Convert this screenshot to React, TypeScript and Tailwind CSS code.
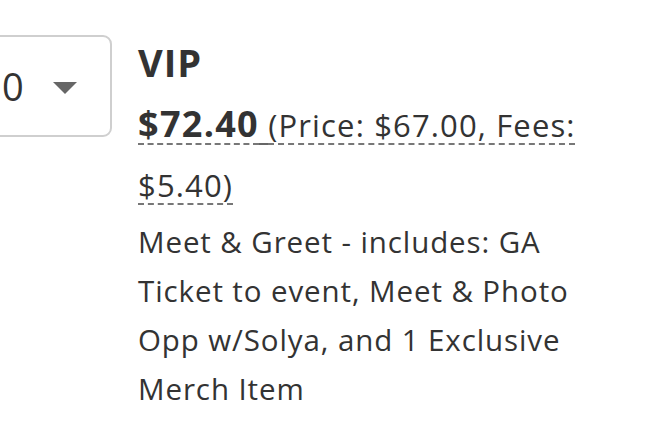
export default function App() {
  return (
    <div
      className="w-[666px] h-[424px] bg-white overflow-hidden flex items-start text-[#333]"
      style={{ fontFamily: '"Open Sans", "Noto Sans", sans-serif' }}
    >
      <div className="-ml-[28px] mt-[35px] w-[140px] h-[102px] shrink-0 rounded-[9px] border-2 border-[#cfcfcf] flex items-center pl-[28px]">
        <span className="text-[38px] leading-none text-[#333]">0</span>
        <svg className="ml-[29px] mt-[4px]" width="24" height="12" viewBox="0 0 24 12">
          <polygon points="0,0 24,0 12,12" fill="#666" />
        </svg>
      </div>
      <div className="ml-[26px] pt-[29px] w-[452px]">
        <div className="text-[38px] font-bold leading-[66px] tracking-[1px]">VIP</div>
        <div className="text-[31px] leading-[60px] tracking-[1.15px] underline decoration-dashed decoration-[#777] decoration-2 underline-offset-[6px]">
          <span className="font-bold text-[36px] leading-none tracking-[1.3px]">$72.40</span>
          <span className="underline decoration-solid decoration-[#666] decoration-2 underline-offset-[6px]"> </span>
          (Price: $67.00, Fees: $5.40)
        </div>
        <div className="text-[29.5px] leading-[49px] tracking-[0.9px] pt-[2px]">
          Meet &amp; Greet - includes: GA Ticket to event, Meet &amp; Photo Opp w/Solya, and 1 Exclusive Merch Item
        </div>
      </div>
    </div>
  );
}
